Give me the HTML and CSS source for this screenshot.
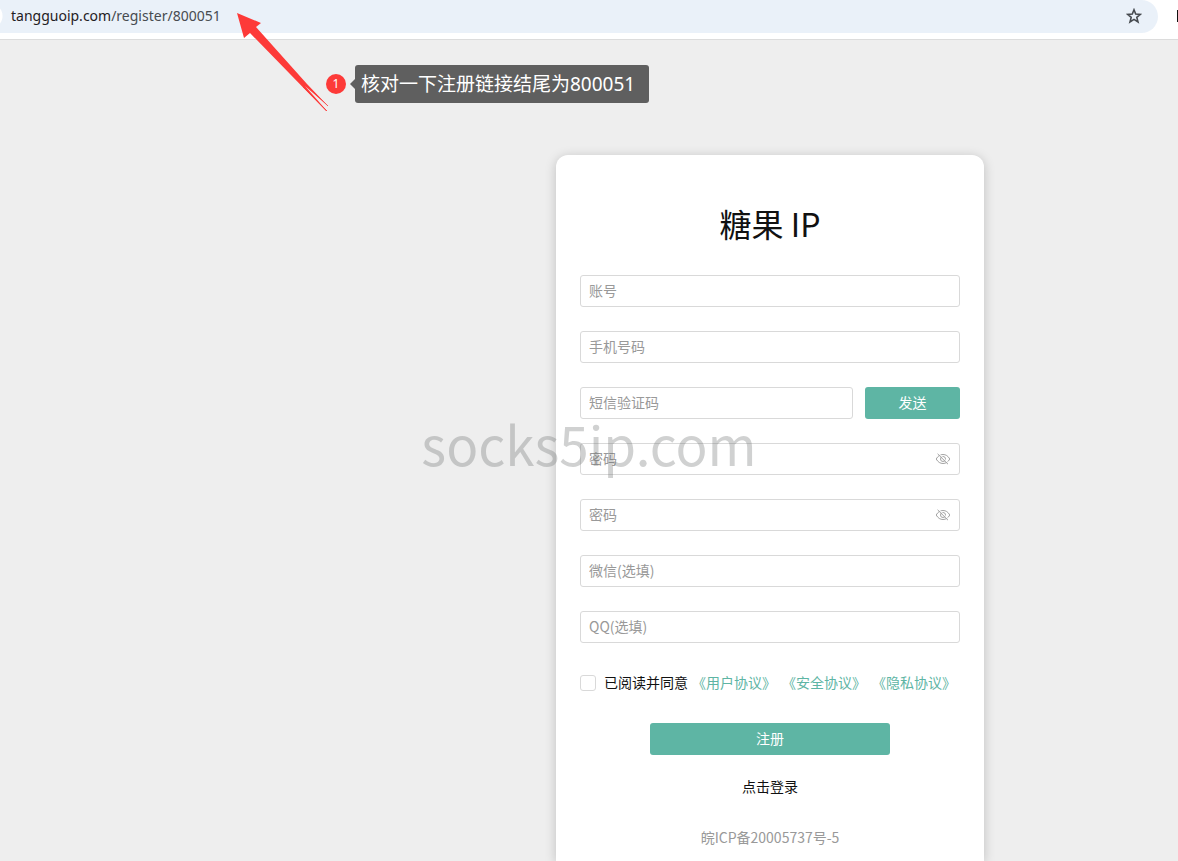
FILE: index.html
```html
<!DOCTYPE html>
<html lang="zh-CN">
<head>
  <meta charset="utf-8">
  <title>糖果 IP</title>
  <link rel="stylesheet" href="styles.css">
</head>
<body>
  <header class="browser">
    <div class="address">
      <span class="url"><span class="host">tangguoip.com</span>/register/800051</span>
      <svg class="star" viewBox="0 0 16 16" width="16" height="16" fill="none" stroke="#474b50" stroke-width="1.6" stroke-linejoin="miter">
        <path d="M8 1.8L9.7 6.1L14.4 6.4L10.8 9.4L12 14L8 11.4L4 14L5.2 9.4L1.6 6.4L6.3 6.1Z"/>
      </svg>
    </div>
    <span class="ext"></span>
  </header>

  <main>
    <form class="card">
      <h1>糖果 IP</h1>
      <input class="field" type="text" placeholder="账号" aria-label="账号">
      <input class="field" type="tel" placeholder="手机号码" aria-label="手机号码">
      <div class="row">
        <input class="field" type="text" placeholder="短信验证码" aria-label="短信验证码">
        <button class="btn send" type="button">发送</button>
      </div>
      <div class="password">
        <input class="field" type="password" placeholder="密码" aria-label="密码">
        <button class="eye" type="button" aria-label="显示密码">
          <svg viewBox="0 0 16 16" width="16" height="16" fill="none" stroke="#a3a3a3" stroke-width="1">
            <path d="M1.2 8C3 4.8 5.3 3.5 8 3.5s5 1.3 6.8 4.5C13 11.2 10.7 12.5 8 12.5S3 11.2 1.2 8Z"/>
            <circle cx="8" cy="8" r="2.5"/>
            <path d="M3.8 2.4l10.4 10.4" stroke="#fff"/>
            <path d="M2.6 2.8l10.4 10.4"/>
          </svg>
        </button>
      </div>
      <div class="password">
        <input class="field" type="password" placeholder="密码" aria-label="确认密码">
        <button class="eye" type="button" aria-label="显示密码">
          <svg viewBox="0 0 16 16" width="16" height="16" fill="none" stroke="#a3a3a3" stroke-width="1">
            <path d="M1.2 8C3 4.8 5.3 3.5 8 3.5s5 1.3 6.8 4.5C13 11.2 10.7 12.5 8 12.5S3 11.2 1.2 8Z"/>
            <circle cx="8" cy="8" r="2.5"/>
            <path d="M3.8 2.4l10.4 10.4" stroke="#fff"/>
            <path d="M2.6 2.8l10.4 10.4"/>
          </svg>
        </button>
      </div>
      <input class="field" type="text" placeholder="微信(选填)" aria-label="微信">
      <input class="field" type="text" placeholder="QQ(选填)" aria-label="QQ">
      <div class="agree">
        <input type="checkbox" id="agree">
        <label for="agree">已阅读并同意</label>
        <div class="terms">
          <a href="#">《用户协议》</a>
          <a href="#">《安全协议》</a>
          <a href="#">《隐私协议》</a>
        </div>
      </div>
      <button class="btn submit" type="submit">注册</button>
      <a class="login" href="#">点击登录</a>
      <p class="icp">皖ICP备20005737号-5</p>
    </form>
  </main>

  <!-- annotations over the page -->
  <svg class="arrow" viewBox="0 0 92 99" width="92" height="99">
    <path fill="#fd3a38" d="M0 0L24 10L19 14L70 71L91 93L68 73L90 98L89 98L13 20L7 25Z"/>
    <path fill="none" stroke="#fd3a38" stroke-width=".8" d="M68 71L91 93M66 74L90 98"/>
  </svg>
  <div class="note">
    <span class="num">1</span>
    <span class="tip">核对一下注册链接结尾为800051</span>
  </div>
  <div class="watermark">socks5ip.com</div>
</body>
</html>
```

FILE: styles.css
```css
* {
  box-sizing: border-box;
}
body {
  margin: 0;
  min-height: 100vh;
  display: flex;
  flex-direction: column;
  position: relative;
  background: #eee;
  color: #111;
  font: 14px/22px "Noto Sans CJK SC", sans-serif;
}
a {
  text-decoration: none;
}
input, button {
  font: inherit;
  margin: 0;
}

.browser {
  display: flex;
  justify-content: space-between;
  height: 40px;
  background: #fff;
  border-bottom: 1px solid #dcdcdc;
}
.address {
  flex: 1;
  display: flex;
  align-items: center;
  justify-content: space-between;
  height: 33px;
  margin-right: 19px;
  padding: 0 16px 2px 11px;
  background: radial-gradient(circle at -10px 16px, #fff 12px, #eaf1f9 13px);
  border-radius: 0 17px 17px 0;
}
.url {
  font-family: "Noto Sans", sans-serif;
  color: #474b50;
}
.host {
  color: #1f2023;
}
.ext {
  width: 1px;
  height: 12px;
  margin-top: 10px;
  background: #111;
}

main {
  flex: 1;
  display: flex;
  justify-content: center;
  padding: 115px 0 0 362px;
}
.card {
  width: 428px;
  padding: 48px 24px 12px;
  display: flex;
  flex-direction: column;
  gap: 24px;
  background: #fff;
  border-radius: 12px 12px 0 0;
  box-shadow: 0 2px 12px rgba(0, 0, 0, .2);
}
h1 {
  margin: 0 0 8px;
  font-size: 32px;
  line-height: 40px;
  font-weight: 400;
  text-align: center;
}
.field {
  width: 100%;
  height: 32px;
  padding: 0 8px 2px;
  border: 1px solid #d9d9d9;
  border-radius: 3px;
  background: #fff;
  color: #111;
  outline: none;
}
.field::placeholder {
  color: #999;
  opacity: 1;
}
.row {
  display: flex;
  gap: 12px;
}
.row .field {
  flex: 1;
  min-width: 0;
}
.btn {
  height: 32px;
  padding: 0 0 2px;
  border: 0;
  border-radius: 3px;
  background: #5eb5a4;
  color: #fff;
}
.send {
  width: 95px;
}
.password {
  position: relative;
  display: flex;
}
.eye {
  position: absolute;
  right: 9px;
  top: 8px;
  width: 16px;
  height: 16px;
  padding: 0;
  border: 0;
  background: none;
}
.eye svg {
  display: block;
}
.agree {
  display: flex;
  align-items: center;
  height: 32px;
}
.agree input {
  appearance: none;
  width: 16px;
  height: 16px;
  margin-right: 8px;
  border: 1px solid #d9d9d9;
  border-radius: 3px;
  background: #fff;
}
.agree label, .terms {
  padding-bottom: 2px;
}
.terms {
  display: flex;
  gap: 6px;
  margin-left: 4px;
}
.terms a {
  color: #5eb5a4;
}
.submit {
  width: 240px;
  align-self: center;
}
.login {
  align-self: center;
  line-height: 14px;
  color: #111;
}
.icp {
  margin: 9px 0 0;
  text-align: center;
  color: #999;
}

.arrow {
  position: absolute;
  left: 237px;
  top: 13px;
}
.note {
  position: absolute;
  left: 326px;
  top: 65px;
  display: flex;
  align-items: center;
  gap: 9px;
}
.num {
  width: 20px;
  height: 20px;
  border-radius: 50%;
  background: #fd3a38;
  color: #fff;
  font: 12px/20px "Noto Sans", sans-serif;
  text-align: center;
}
.tip {
  position: relative;
  padding: 0 14px 0 6px;
  border-radius: 3px;
  background: #5f5f5f;
  color: #fff;
  font: 19px/38px "Noto Sans", "Noto Sans CJK SC", sans-serif;
}
.tip::before {
  content: "";
  position: absolute;
  left: -5px;
  top: 14px;
  border: 5px solid transparent;
  border-left: 0;
  border-right-color: #5f5f5f;
}
.watermark {
  position: absolute;
  top: 407px;
  left: 0;
  right: 0;
  text-align: center;
  font-size: 53px;
  line-height: 72px;
  color: rgba(110, 112, 112, .32);
  pointer-events: none;
}
```
